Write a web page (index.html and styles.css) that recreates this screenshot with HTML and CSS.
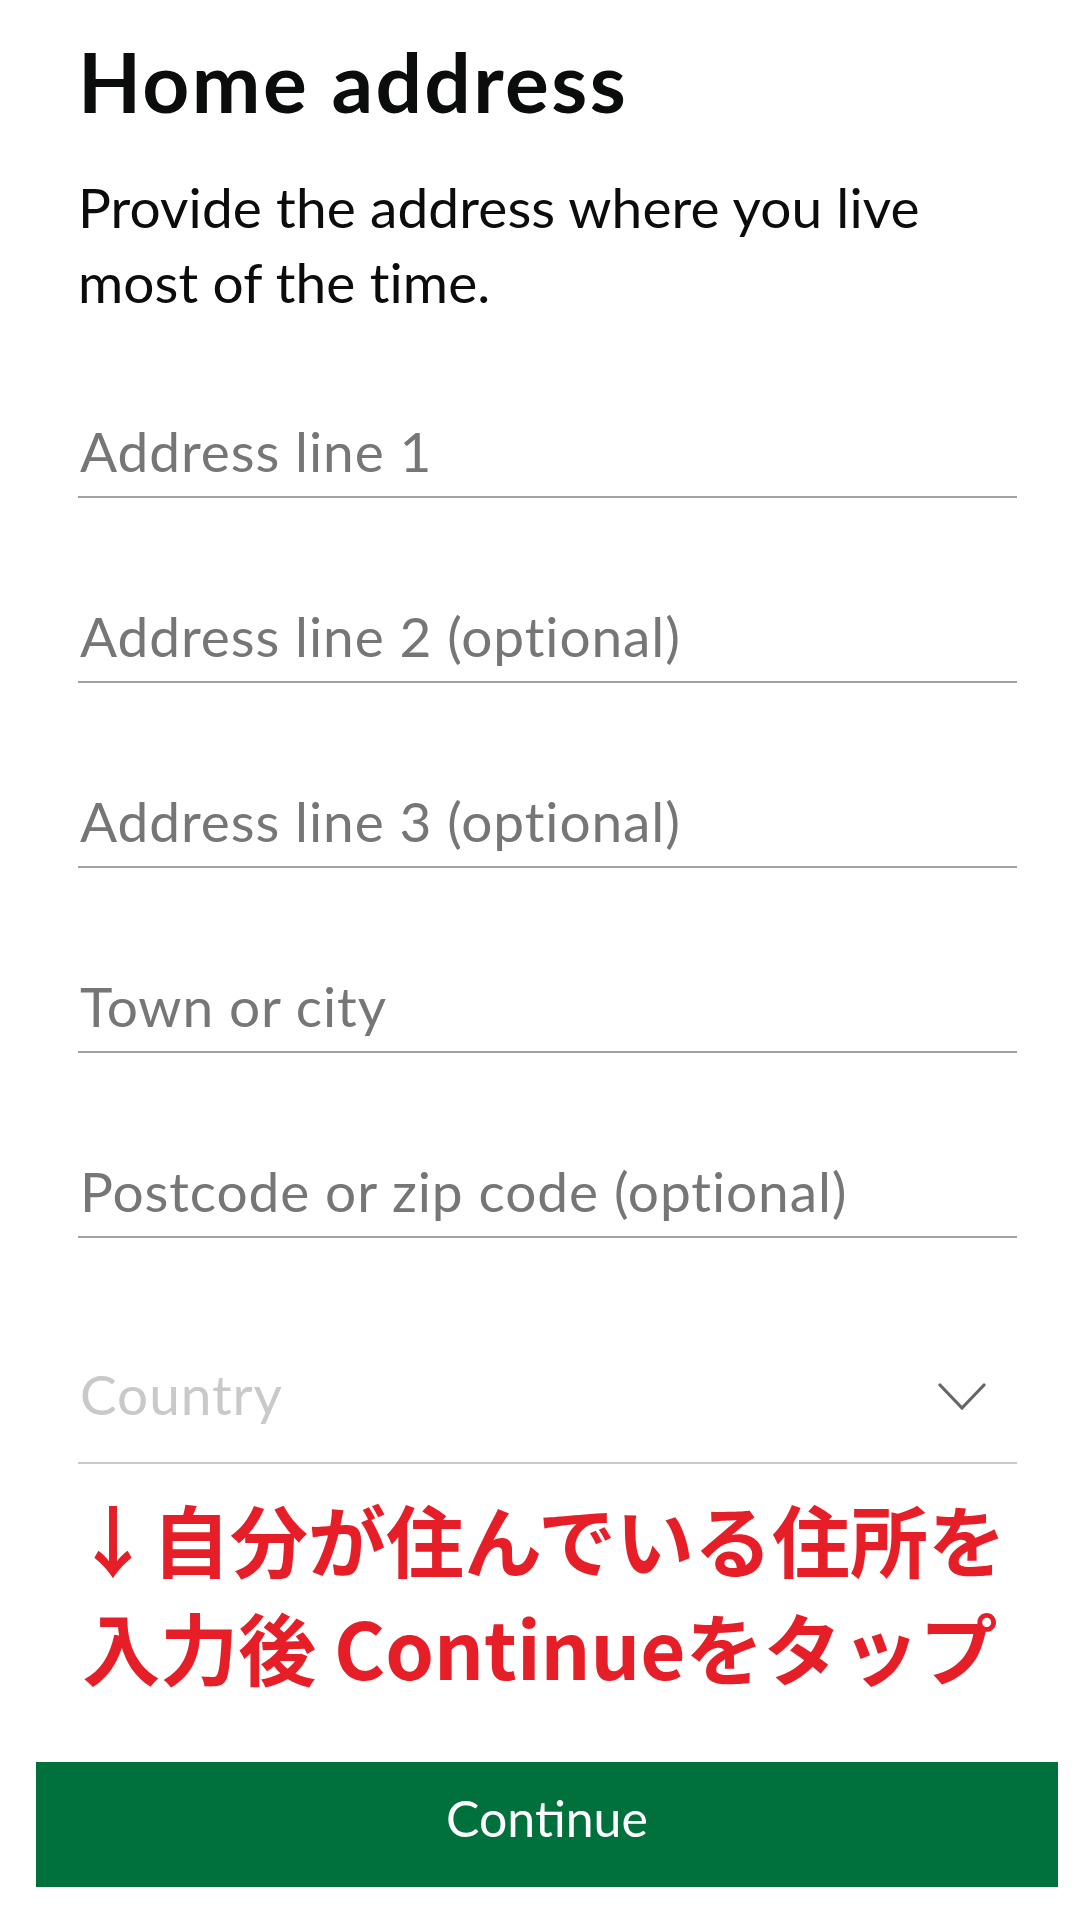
FILE: index.html
```html
<!DOCTYPE html>
<html lang="en">
<head>
<meta charset="utf-8">
<title>Home address</title>
<link rel="stylesheet" href="styles.css">
</head>
<body>
<main class="page">
  <section class="form-area">
    <h1 class="title">Home address</h1>
    <p class="lead">Provide the address where you live most of the time.</p>
    <div class="fields">
      <div class="field">Address line 1</div>
      <div class="field">Address line 2 (optional)</div>
      <div class="field">Address line 3 (optional)</div>
      <div class="field">Town or city</div>
      <div class="field">Postcode or zip code (optional)</div>
      <div class="field field-select">
        <span class="select-text">Country</span>
        <svg class="chevron" width="48" height="28" viewBox="0 0 48 28" aria-hidden="true">
          <polyline points="2,2 24,25 46,2" fill="none" stroke="#666666" stroke-width="3.2" stroke-linecap="round" stroke-linejoin="miter"/>
        </svg>
      </div>
    </div>
  </section>
  <p class="note" lang="ja">↓自分が住んでいる住所を<br>入力後 Continueをタップ</p>
  <button class="continue" type="button">Continue</button>
</main>
</body>
</html>
```

FILE: styles.css
```css
html, body {
  margin: 0;
  padding: 0;
  background: #ffffff;
}

body {
  width: 1080px;
  height: 1920px;
  overflow: hidden;
  font-family: Lato, "Noto Sans", sans-serif;
  font-variant-ligatures: none;
  color: #0b0c0c;
}

.page {
  display: flex;
  flex-direction: column;
}

.form-area {
  padding: 32px 63px 0 78px;
}

.title {
  margin: 0;
  font-weight: 700;
  font-size: 82px;
  line-height: 1.2;
  color: #0b0c0c;
  letter-spacing: 2.4px;
}

.lead {
  margin: 40px 0 0;
  font-size: 55px;
  line-height: 75px;
  font-weight: 400;
  color: #0b0c0c;
  letter-spacing: 0.1px;
}

.fields {
  display: flex;
  flex-direction: column;
  gap: 7px;
}

.field {
  padding: 98px 0 12px 2px;
  border-bottom: 2px solid #a2a2a2;
  font-size: 55px;
  line-height: 66px;
  color: #767676;
  letter-spacing: 0.9px;
}

.field-select {
  display: flex;
  align-items: center;
  justify-content: space-between;
  padding: 116px 31px 35px 2px;
  border-bottom-color: #cacaca;
}

.select-text {
  color: #c9c9c9;
}

.chevron {
  display: block;
  margin-top: 6px;
}

.note {
  margin: 20px 0 0;
  text-align: center;
  font-family: "Noto Sans CJK JP", "Noto Sans", sans-serif;
  font-weight: 700;
  font-size: 78px;
  line-height: 108px;
  color: #e61e27;
}

.continue {
  display: flex;
  align-items: center;
  justify-content: center;
  margin: 62px 22px 0 36px;
  height: 125px;
  padding: 0 0 14px;
  border: none;
  border-radius: 0;
  background: #00703c;
  color: #ffffff;
  font-family: Lato, "Noto Sans", sans-serif;
  font-size: 50px;
  line-height: 1.2;
  font-weight: 400;
}
```
